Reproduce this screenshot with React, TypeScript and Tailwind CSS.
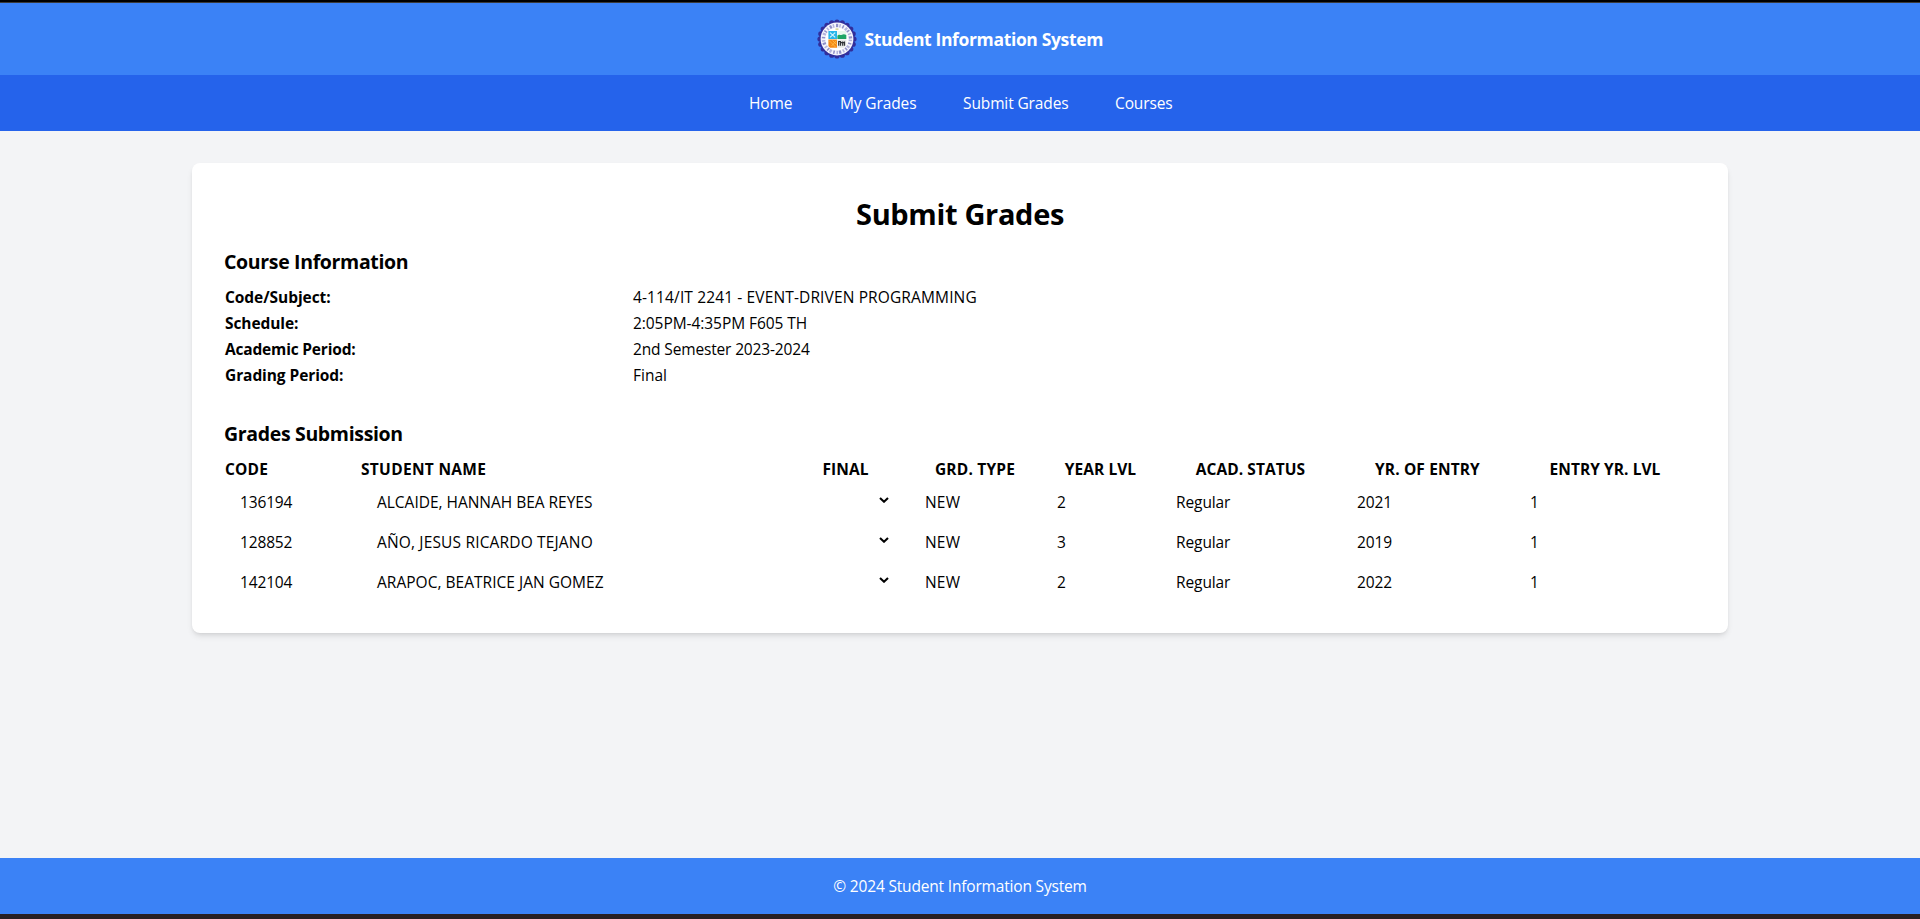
import type { ReactNode } from 'react';

const navLinks = [
  { label: 'Home', width: 'w-[91px]' },
  { label: 'My Grades', width: 'w-[123px]' },
  { label: 'Submit Grades', width: 'w-[152px]' },
  { label: 'Courses', width: 'w-[56px]' },
];

const courseInfo = [
  { label: 'Code/Subject:', value: '4-114/IT 2241 - EVENT-DRIVEN PROGRAMMING', labelCls: 'tracking-[-0.06px]', valueCls: 'tracking-[0.13px]' },
  { label: 'Schedule:', value: '2:05PM-4:35PM F605 TH', labelCls: 'tracking-[-0.1px]', valueCls: 'tracking-[-0.06px]' },
  { label: 'Academic Period:', value: '2nd Semester 2023-2024', labelCls: 'tracking-[-0.18px]', valueCls: 'tracking-[-0.15px]' },
  { label: 'Grading Period:', value: 'Final', labelCls: 'tracking-[-0.08px]', valueCls: '' },
];

const columns = [
  { title: 'CODE', cls: 'w-[136px] text-left tracking-[0.2px]' },
  { title: 'STUDENT NAME', cls: 'w-[422px] text-left tracking-[0.3px]' },
  { title: 'FINAL', cls: 'w-[126px] text-center tracking-[0.1px]' },
  { title: 'GRD. TYPE', cls: 'w-[133px] text-center tracking-[0.2px]' },
  { title: 'YEAR LVL', cls: 'w-[118px] text-center tracking-[0.06px]' },
  { title: 'ACAD. STATUS', cls: 'w-[182px] text-center tracking-[0.06px]' },
  { title: 'YR. OF ENTRY', cls: 'w-[172px] text-center tracking-[0.12px]' },
  { title: 'ENTRY YR. LVL', cls: 'w-[183px] text-center tracking-[0.05px]' },
];

const students = [
  { code: '136194', name: 'ALCAIDE, HANNAH BEA REYES', nameCls: 'tracking-[-0.02px]', type: 'NEW', year: '2', status: 'Regular', entry: '2021', level: '1' },
  { code: '128852', name: 'AÑO, JESUS RICARDO TEJANO', nameCls: 'tracking-[0.16px]', type: 'NEW', year: '3', status: 'Regular', entry: '2019', level: '1' },
  { code: '142104', name: 'ARAPOC, BEATRICE JAN GOMEZ', nameCls: 'tracking-[0.02px]', type: 'NEW', year: '2', status: 'Regular', entry: '2022', level: '1' },
];

const scallops = Array.from({ length: 20 }, (_, i) => (i * Math.PI) / 10);
const letters = Array.from({ length: 26 }, (_, i) => i);

function Seal() {
  return (
    <svg viewBox="0 0 40 40" className="size-10 shrink-0" aria-hidden="true">
      {scallops.map((a) => (
        <circle key={a} cx={20 + 17 * Math.cos(a)} cy={20 + 17 * Math.sin(a)} r="2.6" fill="#312e9b" />
      ))}
      <circle cx="20" cy="20" r="17.7" fill="#312e9b" />
      <circle cx="20" cy="20" r="16.4" fill="#f4f5fc" />
      {letters.map((i) => (
        <rect
          key={i}
          x="19"
          y="4.8"
          width={i % 3 === 0 ? 2.2 : 1.5}
          height="3.4"
          fill={i % 2 ? '#b3b4dc' : '#8f90c8'}
          transform={`rotate(${(i * 360) / 26} 20 20)`}
        />
      ))}
      <circle cx="20" cy="20" r="11.3" fill="#fff" />
      <path d="M18.500 9.300h3v1.800h-3z" fill="#d9d6a0" />
      <path d="M11.400 12h8.600v8h-8.600z" fill="#27b5ea" />
      <path d="m13 13.600 5.200 4.800m0-4.800-5.200 4.800" stroke="#d8f4ff" strokeWidth="1.1" />
      <path d="M20.400 12h8.900v8h-8.900z" fill="#e9f7ee" />
      <path d="M20.400 16.800c2-2.200 3 .1 4.600-1 1.600-1 2.700-.6 4.300.3v3.900h-8.900z" fill="#1fa566" />
      <path d="M11.400 20.500h8.600v8.200h-7l-1.600-1.600z" fill="#f58a16" />
      <path d="m12 21.500 6.500 6.500m-3-6.500 4 4m0-4-5 5.500" stroke="#ffc24b" strokeWidth="0.8" />
      <path d="M20.400 20.500h8.900v5.600l-2.600 2.600h-6.300z" fill="#e6e8e6" />
      <path d="M21.700 26.700v-4.200h1.800v4.200m2.200-4.200v4.200m1.800-4.200v4.200m-4.500-3h4" stroke="#303336" strokeWidth="1.200" fill="none" />
    </svg>
  );
}

function SectionTitle({ children }: { children: ReactNode }) {
  return <h3 className="mb-2 text-[19.5px] leading-7 font-bold tracking-[-0.34px]">{children}</h3>;
}

function GradeSelect() {
  return (
    <div className="flex h-6 items-start justify-end pt-[7px] pr-[19px]">
      <svg viewBox="0 0 10 6" className="h-[6px] w-[10px]" fill="none" stroke="#000" strokeWidth="2.1">
        <path d="M1 1 5 4.700 9 1" />
      </svg>
    </div>
  );
}

export default function App() {
  return (
    <div className="flex h-[919px] flex-col overflow-hidden bg-gray-100 font-['Open_Sans','Noto_Sans',sans-serif] text-[15.5px] leading-6 text-black">
      <div className="h-[3px] shrink-0 border-b border-[#3a3a3a] bg-black" />
      <header className="flex h-[72px] shrink-0 items-center justify-center bg-[#3b82f6] text-white">
        <Seal />
        <h1 className="ml-2 w-[239px] text-[17.5px] leading-7 font-bold tracking-[-0.35px] whitespace-nowrap">Student Information System</h1>
      </header>
      <nav className="flex h-14 shrink-0 items-center justify-center bg-[#2563eb] tracking-[-0.12px] text-white">
        {navLinks.map((l) => (
          <a key={l.label} href="#" className={`${l.width} whitespace-nowrap`}>
            {l.label}
          </a>
        ))}
      </nav>
      <main className="flex-1 pt-8">
        <section className="mx-auto h-[470px] w-[1536px] rounded-lg bg-white px-8 pt-[33px] shadow-md">
          <h2 className="mb-4 text-center text-[29px] leading-9 font-bold tracking-[-0.34px]">Submit Grades</h2>
          <div className="mb-8">
            <SectionTitle>Course Information</SectionTitle>
            <dl>
              {courseInfo.map((r) => (
                <div key={r.label} className="flex h-[26px] items-center pl-px">
                  <dt className={`w-[408px] font-bold ${r.labelCls}`}>{r.label}</dt>
                  <dd className={r.valueCls}>{r.value}</dd>
                </div>
              ))}
            </dl>
          </div>
          <SectionTitle>Grades Submission</SectionTitle>
          <table className="w-[1472px] table-fixed border-collapse">
            <thead>
              <tr className="h-[26px]">
                {columns.map((c) => (
                  <th key={c.title} className={`p-0 pl-px font-bold ${c.cls}`}>
                    {c.title}
                  </th>
                ))}
              </tr>
            </thead>
            <tbody>
              {students.map((s) => (
                <tr key={s.code} className="h-10">
                  <td className="px-4 tracking-[-0.15px]">{s.code}</td>
                  <td className={`pl-[17px] ${s.nameCls}`}>{s.name}</td>
                  <td>
                    <GradeSelect />
                  </td>
                  <td className="pl-[17px] tracking-[0.2px]">{s.type}</td>
                  <td className="px-4">{s.year}</td>
                  <td className="pl-[17px] tracking-[-0.1px]">{s.status}</td>
                  <td className="px-4 tracking-[-0.15px]">{s.entry}</td>
                  <td className="pl-[17px]">{s.level}</td>
                </tr>
              ))}
            </tbody>
          </table>
        </section>
      </main>
      <footer className="flex h-14 shrink-0 items-center justify-center bg-[#3b82f6] tracking-[-0.18px] text-white">
        © 2024 Student Information System
      </footer>
      <div className="h-[5px] shrink-0 bg-[#281f23]" />
    </div>
  );
}
